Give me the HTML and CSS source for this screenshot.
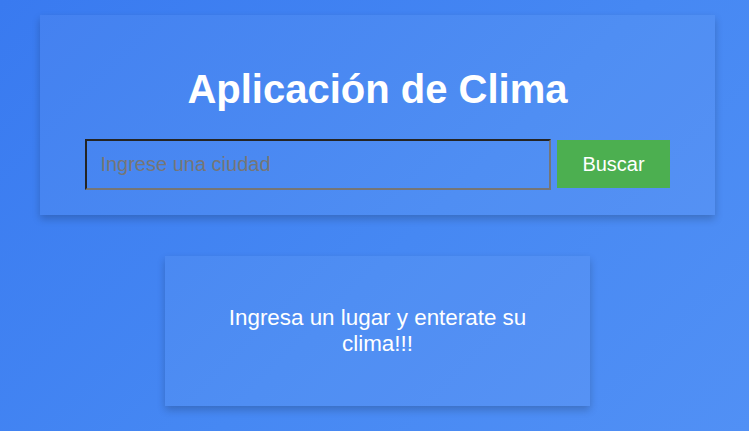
FILE: index.html
```html
<!DOCTYPE html>
<html lang="es">
<head>
<meta charset="utf-8">
<title>Aplicación de Clima</title>
<link rel="stylesheet" href="styles.css">
</head>
<body>
<main class="app">
  <section class="card search-card">
    <h1 class="title">Aplicación de Clima</h1>
    <form class="search-row">
      <input class="city-input" type="text" placeholder="Ingrese una ciudad">
      <button class="search-btn" type="button">Buscar</button>
    </form>
  </section>
  <section class="card result-card">
    <p class="message">Ingresa un lugar y enterate su clima!!!</p>
  </section>
</main>
</body>
</html>
```
FILE: styles.css
```css
html, body {
  margin: 0;
  height: 100%;
}
body {
  font-family: "Liberation Sans", Arial, sans-serif;
  background: linear-gradient(135deg, #397af0 0%, #4688f3 55%, #5190f5 100%);
  color: #fff;
  overflow: hidden;
}
.app {
  display: flex;
  flex-direction: column;
  align-items: center;
  gap: 41px;
  padding: 15px 0 0 6px;
}
.card {
  background: rgba(255, 255, 255, 0.05);
  box-shadow: 0 4px 8px rgba(0, 0, 0, 0.2);
  box-sizing: border-box;
}
.search-card {
  width: 675px;
  padding: 25px;
  text-align: center;
}
.title {
  font-size: 40px;
  font-weight: bold;
  margin: 26.8px 0;
  line-height: normal;
}
.search-row {
  display: flex;
  justify-content: center;
  align-items: center;
  gap: 6px;
  margin: 0;
}
.city-input {
  width: 466px;
  box-sizing: border-box;
  font-family: "Liberation Sans", Arial, sans-serif;
  font-size: 20px;
  line-height: 23px;
  padding: 12px 13px;
  border-width: 2px;
  border-style: solid;
  border-color: #242424 #767676 #767676 #242424;
  background: transparent;
  color: #fff;
  outline: none;
}
.city-input::placeholder {
  color: #767676;
}
.search-btn {
  height: 48px;
  padding: 0 25px;
  border: none;
  background: #4caf50;
  color: #fff;
  font-family: "Liberation Sans", Arial, sans-serif;
  font-size: 20px;
}
.result-card {
  width: 425px;
  padding: 49px 60px;
  text-align: center;
}
.message {
  margin: 0;
  font-size: 22.4px;
  line-height: 26px;
}
```
